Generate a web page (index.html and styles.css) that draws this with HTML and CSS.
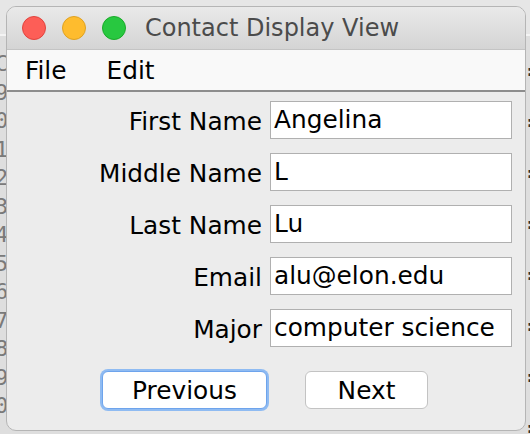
FILE: index.html
```html
<!DOCTYPE html>
<html>
<head>
<meta charset="utf-8">
<link rel="stylesheet" href="styles.css">
</head>
<body>
<div class="desktop">
  <div class="gutter">C<br>9<br>0<br>1<br>2<br>3<br>4<br>5<br>6<br>7<br>8<br>9<br>0</div>
  <div class="rightmarks">:<br>:<br>:<br>:<br>:<br>:<br>:<br>:</div>
  <div class="window">
    <div class="titlebar">
      <div class="lights">
        <span class="light red"></span>
        <span class="light yellow"></span>
        <span class="light green"></span>
      </div>
      <div class="title">Contact Display View</div>
    </div>
    <div class="menubar">
      <span class="menu">File</span>
      <span class="menu">Edit</span>
    </div>
    <div class="content">
      <div class="form">
        <label class="label">First Name</label><div class="field">Angelina</div>
        <label class="label">Middle Name</label><div class="field">L</div>
        <label class="label">Last Name</label><div class="field">Lu</div>
        <label class="label">Email</label><div class="field">alu@elon.edu</div>
        <label class="label">Major</label><div class="field">computer science</div>
      </div>
      <div class="buttons">
        <button class="btn btn-prev">Previous</button>
        <button class="btn btn-next">Next</button>
      </div>
    </div>
  </div>
</div>
</body>
</html>
```
FILE: styles.css
```css
html, body {
  margin: 0;
  padding: 0;
}
body {
  width: 530px;
  height: 434px;
  overflow: hidden;
  background: #e2e2e2;
  font-family: "DejaVu Sans", "Liberation Sans", sans-serif;
}
.desktop {
  position: relative;
  width: 530px;
  height: 434px;
  background: linear-gradient(#e6e6e6 0, #e6e6e6 34px, #f4f4f4 34px, #f4f4f4 36px, #dedede 36px);
}
.gutter {
  position: absolute;
  left: -5px;
  top: 50px;
  font-family: "DejaVu Sans Mono", monospace;
  font-size: 22px;
  line-height: 28.5px;
  color: #7a7a7a;
}
.rightmarks {
  position: absolute;
  left: 525px;
  top: 45px;
  font-family: "DejaVu Sans Mono", monospace;
  font-size: 16px;
  font-weight: bold;
  line-height: 51px;
  color: #333;
}
.window {
  position: absolute;
  left: 6px;
  top: 6px;
  width: 518px;
  height: 423px;
  border: 1px solid #b5b5b5;
  border-radius: 10px;
  background: #ececec;
  overflow: hidden;
  display: flex;
  flex-direction: column;
}
.titlebar {
  height: 42px;
  flex: none;
  background: linear-gradient(#e9e9e9, #d4d4d4);
  border-bottom: 1px solid #c4c4c4;
  position: relative;
  display: flex;
  align-items: center;
  justify-content: center;
}
.lights {
  position: absolute;
  left: 15px;
  top: 9px;
  display: flex;
  gap: 16px;
}
.light {
  width: 22px;
  height: 22px;
  border-radius: 50%;
  border: 1px solid rgba(0,0,0,0.12);
}
.red { background: #fd5e57; border-color: #e0443e; }
.yellow { background: #febc2e; border-color: #dea123; }
.green { background: #28c840; border-color: #1aab29; }
.title {
  font-size: 24px;
  color: #4b4b4b;
  padding-left: 12px;
}
.menubar {
  height: 40px;
  flex: none;
  background: #f9f9f9;
  border-bottom: 2px solid #8d8d8d;
  display: flex;
  align-items: center;
  padding-left: 18px;
  gap: 40px;
}
.menu {
  font-size: 24.8px;
  color: #000;
}
.content {
  flex: 1;
  display: flex;
  flex-direction: column;
  padding-top: 9px;
}
.form {
  display: grid;
  grid-template-columns: 1fr 242px;
  column-gap: 8px;
  row-gap: 14px;
  padding-right: 13px;
  align-items: center;
}
.label {
  text-align: right;
  font-size: 24.8px;
  color: #000;
  padding-top: 2px;
}
.field {
  height: 36px;
  border: 1px solid #b0b0b0;
  background: #fff;
  font-size: 24.8px;
  line-height: 36px;
  padding-left: 3px;
  color: #000;
  white-space: nowrap;
  overflow: hidden;
}
.buttons {
  display: flex;
  justify-content: center;
  gap: 38px;
  margin-top: 24px;
  padding-right: 2px;
}
.btn {
  height: 38px;
  background: #fff;
  border: 1px solid #c3c3c3;
  border-radius: 6px;
  font-family: "DejaVu Sans", "Liberation Sans", sans-serif;
  font-size: 24.8px;
  color: #000;
  padding: 0;
}
.btn-prev {
  width: 165px;
  border-color: #6ea4ec;
  box-shadow: 0 0 0 2px #8fbbf2;
}
.btn-next {
  width: 123px;
}
```
